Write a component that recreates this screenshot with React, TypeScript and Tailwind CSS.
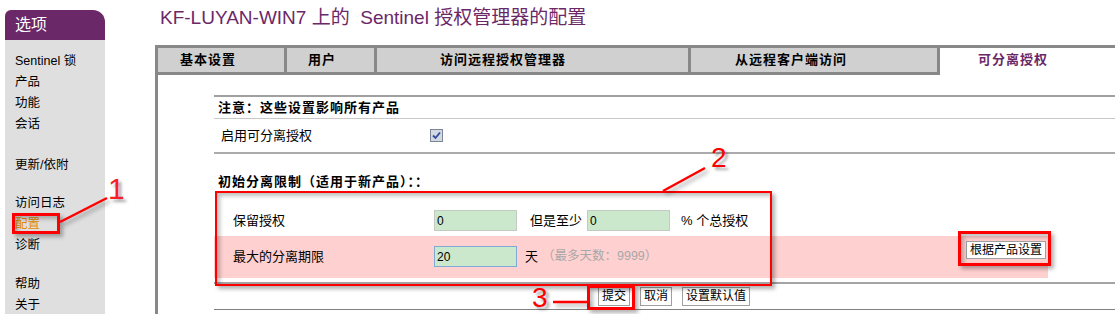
import React from 'react';

const navGroups: { items: string[]; mt: string }[] = [
  { items: ['Sentinel 锁', '产品', '功能', '会话'], mt: 'mt-0' },
  { items: ['更新/依附'], mt: 'mt-[20px]' },
  { items: ['访问日志', '配置', '诊断'], mt: 'mt-[17px]' },
  { items: ['帮助', '关于'], mt: 'mt-[18px]' },
];

const tabs = [
  { label: '基本设置', w: 'w-[129px]', pl: 'pl-[22px]' },
  { label: '用户', w: 'w-[90px]', pl: 'pl-[21px]' },
  { label: '访问远程授权管理器', w: 'w-[314px]', pl: 'pl-[63px]' },
  { label: '从远程客户端访问', w: 'w-[249px]', pl: 'pl-[44px]' },
];

function Sidebar() {
  return (
    <aside className="ml-[5px] mt-[10px] w-[100px] shrink-0 flex flex-col">
      <div className="h-[30px] bg-[#6b2868] rounded-tl-[6px] rounded-tr-[12px] pl-[10px] text-white text-[16px] leading-[30px]">
        选项
      </div>
      <div className="flex-1 bg-[#dfdfdf] pl-[10px] pt-[11px] text-[12.5px] leading-[21px] text-black">
        {navGroups.map((g, i) => (
          <div key={i} className={g.mt}>
            {g.items.map((item) => (
              <div key={item} className={item === '配置' ? 'text-[#e58a00]' : ''}>
                {item}
              </div>
            ))}
          </div>
        ))}
      </div>
    </aside>
  );
}

function Checkbox() {
  return (
    <div className="w-[13px] h-[13px] border border-[#7c8696] bg-[#d4d8e2] flex items-center justify-center">
      <svg width="9" height="9" viewBox="0 0 9 9">
        <path d="M1 4.5 L3.5 7 L8 1.5" fill="none" stroke="#2c4c9c" strokeWidth="1.8" />
      </svg>
    </div>
  );
}

function Field({ value, focus }: { value: string; focus?: boolean }) {
  return (
    <input
      readOnly
      value={value}
      className={
        'w-[83px] h-[21px] bg-[#cce8cc] pl-[2px] text-[12px] text-black outline-none border ' +
        (focus ? 'border-[#7eaad8]' : 'border-[#c2cac2]')
      }
    />
  );
}

function Btn({ children }: { children: React.ReactNode }) {
  return (
    <button className="h-[19px] px-[3px] bg-white border border-[#a0a0a0] text-[12px] leading-[17px] text-black">
      {children}
    </button>
  );
}

function Settings() {
  return (
    <div className="pl-[56px] pt-[20px] text-[13px] text-black">
      <div className="border-t-2 border-[#a0a0a0]">
        <div className="h-[22px] leading-[21px] pl-[4px] font-bold tracking-[1px] border-b border-[#c8c8c8]">
          注意：这些设置影响所有产品
        </div>
        <div className="h-[35px] flex items-center border-b-2 border-[#ababab]">
          <div className="w-[216px] pl-[7px]">启用可分离授权</div>
          <Checkbox />
        </div>
        <div className="h-[42px] pt-[19px] leading-[18px] pl-[4px] font-bold tracking-[1px]">
          初始分离限制（适用于新产品）：：
        </div>
        <div className="h-[40px] flex items-center pt-[14px] pb-[5px]">
          <div className="w-[220px] pl-[19px]">保留授权</div>
          <Field value="0" />
          <span className="ml-[13px] mr-[5px]">但是至少</span>
          <Field value="0" />
          <span className="ml-[11px]">% 个总授权</span>
        </div>
        <div className="w-[834px] h-[42px] bg-[#ffd0d0] flex items-start">
          <div className="mt-[10px] flex items-center">
            <div className="w-[220px] pl-[19px]">最大的分离期限</div>
            <Field value="20" focus />
            <span className="ml-[8px]">天</span>
            <span className="ml-[4px] text-[#a8a8a8] text-[12.5px]">（最多天数：9999）</span>
          </div>
          <button className="ml-auto mr-[2px] mt-[5px] h-[18px] w-[80px] bg-white border border-[#a0a0a0] text-[12px] leading-[16px]">
            根据产品设置
          </button>
        </div>
        <div className="mt-[4px] border-t-2 border-[#a4a4a4] h-[28px] pt-[3px] pl-[384px] flex gap-[10px] border-b border-b-[#808080]">
          <Btn>提交</Btn>
          <Btn>取消</Btn>
          <Btn>设置默认值</Btn>
        </div>
      </div>
    </div>
  );
}

const boxShadow =
  'shadow-[3px_3px_4px_rgba(0,0,0,0.3),inset_3px_3px_4px_rgba(0,0,0,0.25)]';

function Annotations() {
  return (
    <>
      <div className={'absolute left-[12px] top-[213px] w-[48px] h-[21px] border-[3px] border-[#ff0000] ' + boxShadow} />
      <div className={'absolute left-[215px] top-[191px] w-[557px] h-[95px] border-[2px] border-[#ff0000] ' + boxShadow} />
      <div className={'absolute left-[958px] top-[231px] w-[93px] h-[35px] border-[3px] border-[#ff0000] ' + boxShadow} />
      <div className={'absolute left-[587px] top-[285px] w-[48px] h-[25px] border-[3px] border-[#ff0000] ' + boxShadow} />
      <svg
        className="absolute left-0 top-0 pointer-events-none [filter:drop-shadow(3px_3px_2px_rgba(0,0,0,0.35))]"
        width="1115"
        height="314"
      >
        <line x1="60" y1="222" x2="107" y2="198" stroke="#ff0000" strokeWidth="2.5" />
        <line x1="705" y1="168" x2="663" y2="191" stroke="#ff0000" strokeWidth="2.5" />
        <line x1="553" y1="302" x2="588" y2="302" stroke="#ff0000" strokeWidth="2.5" />
      </svg>
      <div className="absolute left-[108px] top-[174px] text-[30px] leading-[30px] text-[#f5202a] [text-shadow:3px_3px_3px_rgba(0,0,0,0.35)]">
        1
      </div>
      <div className="absolute left-[711px] top-[144px] text-[28px] leading-[28px] text-[#ff0000] [text-shadow:3px_3px_3px_rgba(0,0,0,0.35)]">
        2
      </div>
      <div className="absolute left-[532px] top-[284px] text-[28px] leading-[28px] text-[#ff0000] [text-shadow:3px_3px_3px_rgba(0,0,0,0.35)]">
        3
      </div>
    </>
  );
}

export default function App() {
  return (
    <div className="relative w-[1115px] h-[314px] overflow-hidden bg-white flex font-['Liberation_Sans','Noto_Sans_CJK_SC',sans-serif]">
      <Sidebar />
      <main className="ml-[50px] flex-1 min-w-0 flex flex-col">
        <h1 className="h-[45px] pl-[5px] pt-[7px] text-[19px] leading-[22px] text-[#6b2868] whitespace-pre">
          {'KF-LUYAN-WIN7 上的  Sentinel 授权管理器的配置'}
        </h1>
        <div className="flex-1 border-l-[3px] border-t-[3px] border-[#888888] flex flex-col">
          <div className="flex h-[27px] shrink-0">
            {tabs.map((t) => (
              <div
                key={t.label}
                className={
                  t.w +
                  ' ' +
                  t.pl +
                  ' h-[27px] bg-[#d0d0d0] border-r-[3px] border-b-[3px] border-[#888888] font-bold text-[13px] tracking-[1px] leading-[24px] text-black'
                }
              >
                {t.label}
              </div>
            ))}
            <div className="flex-1 pl-[38px] font-bold text-[13px] tracking-[1px] leading-[24px] text-[#6b2868]">
              可分离授权
            </div>
          </div>
          <Settings />
        </div>
      </main>
      <Annotations />
    </div>
  );
}
